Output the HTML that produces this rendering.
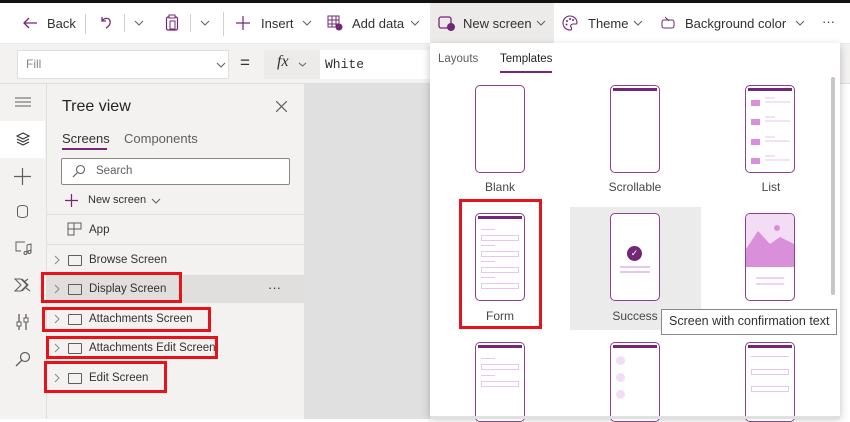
<!DOCTYPE html><html><head><style>
*{box-sizing:border-box;margin:0;padding:0}
body{width:850px;height:419px;overflow:hidden;position:relative;font-family:"Liberation Sans",sans-serif;background:#fff;color:#323130;font-size:12px}
.a{position:absolute}
.t{position:absolute;white-space:nowrap}
.cv{position:absolute}
.rb{position:absolute;border:3px solid #e8121a}
.ph{position:absolute;width:50px;height:88px;border:1.5px solid #8e3f8e;border-radius:5px;background:#fff}
.bar{position:absolute;left:2px;right:2px;top:2px;height:3px;background:#742774}
.lbl{position:absolute;font-size:12px;color:#484644;width:130px;text-align:center}
.row{position:absolute;left:46px;width:258px;height:29px}
.row .ch{position:absolute;left:8px;top:9px}
.row .sq{position:absolute;left:22px;top:9px;width:14px;height:11px;border:1px solid #605e5c;border-radius:1px}
.row .n{position:absolute;left:43px;top:8px;font-size:11.5px;color:#323130}
.ln{position:absolute;height:1px;background:#e6c6ec}
.fld{position:absolute;left:5px;width:38px;height:6px;border:1px solid #e6c6ec}
</style></head><body>
<div class="a" style="left:0;top:0;width:850px;height:3px;background:#111"></div>
<!-- toolbar -->
<div class="a" style="left:0;top:3px;width:850px;height:41px;background:#fff;border-bottom:1px solid #edebe9"></div>
<svg class="a" style="left:22px;top:16px" width="16" height="14"><path d="M15 7H2M7 2L2 7l5 5" stroke="#742774" fill="none" stroke-width="1.3"/></svg>
<div class="t" style="left:47px;top:16px;font-size:13px">Back</div>
<div class="a" style="left:85px;top:14px;width:1px;height:20px;background:#d2d0ce"></div>
<svg class="a" style="left:99px;top:15px" width="14" height="14"><path d="M3 2v4h4M3 6c2-3 7-4 8 0c1 3-2 6-4 7" stroke="#742774" fill="none" stroke-width="1.3"/></svg>
<div class="a" style="left:124px;top:14px;width:1px;height:18px;background:#d2d0ce"></div>
<svg class="cv" style="left:134px;top:20px" width="10" height="6"><path d="M1 1l4 4 4-4" stroke="#605e5c" fill="none"/></svg>
<svg class="a" style="left:165px;top:14px" width="14" height="17"><rect x="1.5" y="3" width="11" height="13" rx="1.5" fill="none" stroke="#742774" stroke-width="1.2"/><rect x="4" y="1" width="6" height="3" fill="#fff" stroke="#742774"/><rect x="5" y="7" width="5" height="8" fill="none" stroke="#742774"/></svg>
<div class="a" style="left:190px;top:14px;width:1px;height:18px;background:#d2d0ce"></div>
<svg class="cv" style="left:200px;top:20px" width="10" height="6"><path d="M1 1l4 4 4-4" stroke="#605e5c" fill="none"/></svg>
<div class="a" style="left:223px;top:12px;width:1px;height:24px;background:#d2d0ce"></div>
<svg class="a" style="left:236px;top:16px" width="14" height="14"><path d="M7 0V14M0 7H14" stroke="#742774" stroke-width="1.2"/></svg>
<div class="t" style="left:261px;top:16px;font-size:13px">Insert</div>
<svg class="cv" style="left:302px;top:20px" width="10" height="6"><path d="M1 1l4 4 4-4" stroke="#605e5c" fill="none"/></svg>
<svg class="a" style="left:327px;top:15px" width="16" height="16"><rect x="1" y="1" width="11" height="11" fill="none" stroke="#742774"/><path d="M1 5H12M1 9H12M5 1V12M9 1V12" stroke="#742774"/><circle cx="12" cy="12" r="3.5" fill="#742774"/></svg>
<div class="t" style="left:352px;top:16px;font-size:13px">Add data</div>
<svg class="cv" style="left:410px;top:20px" width="10" height="6"><path d="M1 1l4 4 4-4" stroke="#605e5c" fill="none"/></svg>
<div class="a" style="left:430px;top:3px;width:124px;height:41px;background:#edebe9"></div>
<svg class="a" style="left:438px;top:16px" width="18" height="16"><rect x="1" y="1" width="12" height="11" rx="2" fill="none" stroke="#742774" stroke-width="1.3"/><circle cx="13" cy="11" r="4" fill="#742774"/></svg>
<div class="t" style="left:463px;top:16px;font-size:13px">New screen</div>
<svg class="cv" style="left:536px;top:20px" width="10" height="6"><path d="M1 1l4 4 4-4" stroke="#605e5c" fill="none"/></svg>
<svg class="a" style="left:562px;top:15px" width="16" height="16"><path d="M8 1a7 7 0 1 0 0 14c2 0 2-2 1-3s0-3 2-3h3c1 0 1-1 1-2A7 7 0 0 0 8 1z" fill="none" stroke="#742774" stroke-width="1.1"/><circle cx="5" cy="6" r="1" fill="#742774"/><circle cx="8" cy="4" r="1" fill="#742774"/><circle cx="11" cy="5" r="1" fill="#742774"/><circle cx="4.5" cy="9.5" r="1" fill="#742774"/></svg>
<div class="t" style="left:588px;top:16px;font-size:13px">Theme</div>
<svg class="cv" style="left:633px;top:20px" width="10" height="6"><path d="M1 1l4 4 4-4" stroke="#605e5c" fill="none"/></svg>
<svg class="a" style="left:660px;top:15px" width="16" height="15"><rect x="2" y="5" width="12" height="8" rx="2" fill="none" stroke="#742774"/><path d="M5 2L9 6" stroke="#742774"/></svg>
<div class="t" style="left:685px;top:16px;font-size:13px">Background color</div>
<svg class="cv" style="left:795px;top:20px" width="10" height="6"><path d="M1 1l4 4 4-4" stroke="#605e5c" fill="none"/></svg>
<div class="t" style="left:822px;top:14px;font-size:13px">···</div>
<!-- formula bar -->
<div class="a" style="left:0;top:44px;width:850px;height:40px;background:#f3f2f1;border-bottom:1px solid #e1dfdd"></div>
<div class="a" style="left:17px;top:50px;width:212px;height:29px;background:#fff;border:1px solid #e1dfdd"></div>
<div class="t" style="left:26px;top:57px;font-size:12px;color:#8a8886">Fill</div>
<svg class="cv" style="left:216px;top:62px" width="10" height="6"><path d="M1 1l4 4 4-4" stroke="#605e5c" fill="none"/></svg>
<div class="t" style="left:240px;top:53px;font-size:17px">=</div>
<div class="a" style="left:264px;top:50px;width:56px;height:29px;background:#edebe9"></div>
<div class="t" style="left:277px;top:53px;font-size:16px;font-style:italic;font-family:'Liberation Serif',serif">fx</div>
<svg class="cv" style="left:298px;top:62px" width="9" height="5"><path d="M1 1l3.5 3 3.5-3" stroke="#605e5c" fill="none"/></svg>
<div class="a" style="left:320px;top:50px;width:115px;height:29px;background:#fff"></div>
<div class="t" style="left:325px;top:57px;font-size:13px;font-family:'Liberation Mono',monospace;color:#323130">White</div>
<!-- left rail -->
<div class="a" style="left:0;top:84px;width:46px;height:335px;background:#f3f2f1"></div>
<div class="a" style="left:0;top:121px;width:45px;height:37px;background:#fff"></div>
<svg class="a" style="left:15px;top:97px" width="16" height="10"><path d="M0 1H16M0 5H16M0 9H16" stroke="#605e5c"/></svg>
<svg class="a" style="left:15px;top:131px" width="16" height="16"><path d="M8 2L14 5 8 8 2 5Z M2 8l6 3 6-3 M2 11l6 3 6-3" fill="none" stroke="#323130" stroke-width="1.1"/></svg>
<svg class="a" style="left:14px;top:168px" width="17" height="17"><path d="M8.5 0V17M0 8.5H17" stroke="#605e5c" stroke-width="1.2"/></svg>
<div class="a" style="left:17px;top:205px;width:11px;height:13px;border:1.2px solid #605e5c;border-radius:5px/3px"></div>
<svg class="a" style="left:15px;top:240px" width="17" height="16"><path d="M10 2H1V11H6" fill="none" stroke="#605e5c"/><path d="M12 5V13M12 5L16 4V12" fill="none" stroke="#605e5c"/><circle cx="10.5" cy="13" r="1.5" fill="none" stroke="#605e5c"/><circle cx="14.5" cy="12" r="1.5" fill="none" stroke="#605e5c"/></svg>
<svg class="a" style="left:14px;top:278px" width="18" height="14"><path d="M1 1H7L13 7 7 13H1L7 7Z M8 1L14 7 8 13 M10 4l4 -3 M12 10l4 3" fill="none" stroke="#605e5c" stroke-width="1.1"/></svg>
<svg class="a" style="left:16px;top:313px" width="14" height="18"><path d="M3 1V17M10 1V17" stroke="#605e5c" stroke-width="1.3"/><rect x="1" y="9" width="4" height="4" fill="#fff" stroke="#605e5c"/><rect x="8" y="5" width="4" height="4" fill="#fff" stroke="#605e5c"/></svg>
<svg class="a" style="left:15px;top:351px" width="16" height="16"><circle cx="10" cy="6" r="4.5" fill="none" stroke="#605e5c" stroke-width="1.2"/><path d="M7 9L1 15" stroke="#605e5c" stroke-width="1.3"/></svg>
<!-- tree panel -->
<div class="a" style="left:46px;top:84px;width:258px;height:335px;background:#f3f2f1;border-left:1px solid #e1dfdd"></div>
<div class="t" style="left:62px;top:98px;font-size:16px;color:#252423">Tree view</div>
<svg class="a" style="left:276px;top:101px" width="11" height="11"><path d="M0 0L11 11M11 0L0 11" stroke="#605e5c" stroke-width="1.2"/></svg>
<div class="t" style="left:62px;top:131px;font-size:13px">Screens</div>
<div class="a" style="left:62px;top:148px;width:45px;height:2px;background:#742774"></div>
<div class="t" style="left:124px;top:131px;font-size:13px;color:#605e5c">Components</div>
<div class="a" style="left:61px;top:158px;width:229px;height:27px;background:#fff;border:1px solid #8a8886;border-radius:2px"></div>
<svg class="a" style="left:72px;top:164px" width="14" height="14"><circle cx="8.5" cy="5.5" r="4" fill="none" stroke="#605e5c" stroke-width="1.1"/><path d="M5.5 8.5L1 13" stroke="#605e5c" stroke-width="1.2"/></svg>
<div class="t" style="left:96px;top:165px;font-size:11.5px;color:#605e5c">Search</div>
<svg class="a" style="left:65px;top:194px" width="13" height="13"><path d="M6.5 0V13M0 6.5H13" stroke="#742774" stroke-width="1.2"/></svg>
<div class="t" style="left:88px;top:194px;font-size:11px">New screen</div>
<svg class="cv" style="left:151px;top:198px" width="10" height="6"><path d="M1 1l4 4 4-4" stroke="#605e5c" fill="none"/></svg>
<div class="a" style="left:46px;top:214px;width:258px;height:1px;background:#e1dfdd"></div>
<svg class="a" style="left:67px;top:222px" width="15" height="14"><path d="M1 1H14V7H7V13H1Z M7 1V7 M1 7H7" fill="none" stroke="#605e5c"/></svg>
<div class="t" style="left:89px;top:224px;font-size:11.5px">App</div>
<div class="a" style="left:46px;top:244px;width:258px;height:1px;background:#e1dfdd"></div>
<div class="row" style="top:246px"><svg class="ch" width="6" height="10"><path d="M1 1l4 4-4 4" stroke="#8a8886" fill="none"/></svg><span class="sq"></span><span class="n">Browse Screen</span></div>
<div class="row" style="top:275px;height:28px;background:#e1dfdd"><svg class="ch" width="6" height="10"><path d="M1 1l4 4-4 4" stroke="#8a8886" fill="none"/></svg><span class="sq"></span><span class="n">Display Screen</span><span class="t" style="left:222px;top:5px;font-size:13px">···</span></div>
<div class="row" style="top:305px"><svg class="ch" width="6" height="10"><path d="M1 1l4 4-4 4" stroke="#8a8886" fill="none"/></svg><span class="sq"></span><span class="n">Attachments Screen</span></div>
<div class="row" style="top:334px"><svg class="ch" width="6" height="10"><path d="M1 1l4 4-4 4" stroke="#8a8886" fill="none"/></svg><span class="sq"></span><span class="n">Attachments Edit Screen</span></div>
<div class="row" style="top:364px"><svg class="ch" width="6" height="10"><path d="M1 1l4 4-4 4" stroke="#8a8886" fill="none"/></svg><span class="sq"></span><span class="n">Edit Screen</span></div>
<div class="rb" style="left:41px;top:272px;width:141px;height:31px"></div>
<div class="rb" style="left:42px;top:307px;width:169px;height:25px"></div>
<div class="rb" style="left:46px;top:336px;width:172px;height:23px"></div>
<div class="rb" style="left:44px;top:361px;width:123px;height:32px"></div>
<!-- canvas -->
<div class="a" style="left:304px;top:84px;width:130px;height:335px;background:#e0e0e0"></div>
<div class="a" style="left:836px;top:84px;width:14px;height:335px;background:#fff"></div>
<!-- dropdown -->
<div class="a" style="left:430px;top:43px;width:410px;height:373px;background:#fff;box-shadow:0 3px 8px rgba(0,0,0,.25)"></div>
<div class="t" style="left:438px;top:53px;font-size:11.5px;color:#605e5c">Layouts</div>
<div class="t" style="left:500px;top:53px;font-size:11.5px;color:#252423">Templates</div>
<div class="a" style="left:500px;top:71px;width:52px;height:2px;background:#742774"></div>
<div class="a" style="left:831px;top:77px;width:4px;height:218px;background:#c8c6c4;border-radius:2px"></div>
<!-- row1 -->
<div class="ph" style="left:475px;top:85px"></div>
<div class="lbl" style="left:435px;top:180px">Blank</div>
<div class="ph" style="left:610px;top:85px"><div class="bar"></div></div>
<div class="lbl" style="left:570px;top:180px">Scrollable</div>
<div class="ph" style="left:745px;top:85px"><div class="bar"></div>
<svg class="a" style="left:2px;top:8px" width="44" height="76"><g fill="#d98fd9"><rect x="3" y="6" width="9" height="6"/><rect x="3" y="25" width="9" height="6"/><rect x="3" y="45" width="9" height="6"/><rect x="3" y="64" width="9" height="6"/></g><g stroke="#e6c6ec"><path d="M17 4H27M17 8H42M17 23H27M17 27H42M17 43H27M17 47H42M17 62H27M17 66H42"/></g></svg></div>
<div class="lbl" style="left:706px;top:180px">List</div>
<!-- row2 -->
<div class="a" style="left:570px;top:207px;width:131px;height:123px;background:#ebebeb"></div>
<div class="ph" style="left:475px;top:213px"><div class="bar"></div>
<div class="ln" style="left:5px;top:15px;width:14px"></div><div class="fld" style="top:21px"></div>
<div class="ln" style="left:5px;top:31px;width:14px"></div><div class="fld" style="top:37px"></div>
<div class="ln" style="left:5px;top:47px;width:14px"></div><div class="fld" style="top:53px"></div>
<div class="ln" style="left:5px;top:63px;width:14px"></div><div class="fld" style="top:69px"></div></div>
<div class="lbl" style="left:435px;top:309px">Form</div>
<div class="ph" style="left:610px;top:213px"><div class="a" style="left:16px;top:32px;width:15px;height:15px;border-radius:50%;background:#742774;color:#fff;font-size:9px;text-align:center;line-height:15px">✓</div><div class="ln" style="left:9px;top:52px;width:30px;height:2px"></div><div class="ln" style="left:9px;top:57px;width:30px;height:2px"></div></div>
<div class="lbl" style="left:570px;top:309px">Success</div>
<div class="ph" style="left:745px;top:213px;overflow:hidden">
<svg class="a" style="left:0;top:0" width="48" height="86"><rect width="48" height="53" fill="#f5dcf5"/><path d="M0 35L12 17L24 30L34 23L48 30V53H0Z" fill="#d98fd9"/><circle cx="31" cy="14" r="3" fill="#d98fd9"/><path d="M10 64H38M10 70H38" stroke="#e6c6ec" stroke-width="1.5"/></svg></div>
<!-- row3 -->
<div class="ph" style="left:475px;top:342px;height:80px"><div class="bar"></div><div class="ln" style="left:5px;top:15px;width:14px"></div><div class="fld" style="top:21px"></div><div class="ln" style="left:5px;top:32px;width:14px"></div><div class="fld" style="top:38px"></div></div>
<div class="ph" style="left:610px;top:342px;height:80px"><div class="bar"></div><div class="a" style="left:5px;top:13px;width:9px;height:9px;border-radius:50%;background:#f5dcf5"></div><div class="a" style="left:5px;top:30px;width:9px;height:9px;border-radius:50%;background:#f5dcf5"></div><div class="a" style="left:5px;top:47px;width:9px;height:9px;border-radius:50%;background:#f5dcf5"></div></div>
<div class="ph" style="left:745px;top:342px;height:80px"><div class="bar"></div><div class="ln" style="left:5px;top:13px;width:38px"></div><div class="fld" style="top:26px"></div><div class="fld" style="top:43px"></div></div>
<div class="a" style="left:430px;top:416px;width:410px;height:3px;background:#e0e0e0"></div>
<div class="rb" style="left:459px;top:199px;width:83px;height:130px"></div>
<!-- tooltip -->
<div class="a" style="left:661px;top:309px;width:176px;height:26px;background:#fff;border:1px solid #8a8886"></div>
<div class="t" style="left:669px;top:314px;font-size:12.5px;color:#323130">Screen with confirmation text</div>
</body></html>
